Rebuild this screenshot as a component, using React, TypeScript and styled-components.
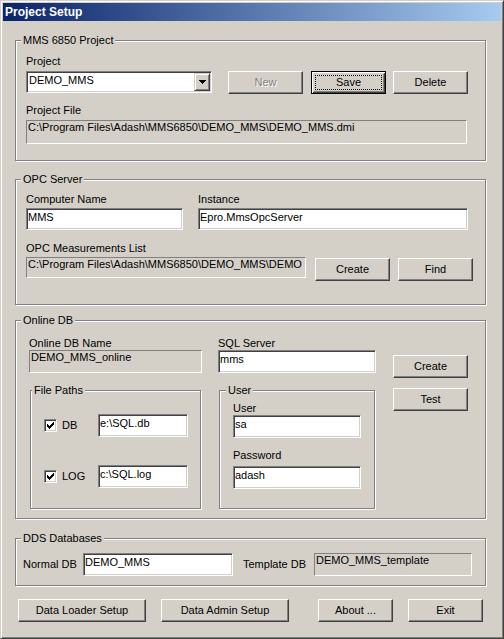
import React from "react";
import styled, { createGlobalStyle, css } from "styled-components";

const GlobalStyle = createGlobalStyle`
  html, body { margin: 0; padding: 0; background: #d4d0c8; }
  body { font-family: "Liberation Sans", Arial, sans-serif; font-size: 11px; }
  * { box-sizing: border-box; }
`;

const FONT = `"Liberation Sans", Arial, sans-serif`;

const Window = styled.div`
  width: 504px;
  height: 639px;
  background: #d4d0c8;
  border: 1px solid;
  border-color: #d4d0c8 #404040 #404040 #d4d0c8;
  box-shadow: inset 1px 1px 0 #fff, inset -1px -1px 0 #808080;
  padding: 2px;
  display: flex;
  flex-direction: column;
  font-family: ${FONT};
  font-size: 11px;
  color: #000;
`;

const TitleBar = styled.div`
  height: 18px;
  flex-shrink: 0;
  background: linear-gradient(to right, #0a246a, #a6caf0);
  display: flex;
  align-items: center;
  padding-left: 2px;
`;

const TitleText = styled.span`
  color: #fff;
  font-weight: bold;
  font-size: 12px;
  line-height: 18px;
  white-space: nowrap;
`;

const Client = styled.div`
  display: flex;
  flex-direction: column;
  padding-left: 12px;
`;

const Group = styled.div<{ $w: number; $h: number; $mt: number; $ml?: number; $pad: string }>`
  position: relative;
  flex-shrink: 0;
  width: ${(p) => p.$w}px;
  height: ${(p) => p.$h}px;
  margin-top: ${(p) => p.$mt}px;
  margin-left: ${(p) => p.$ml ?? 0}px;
  padding: ${(p) => p.$pad};
  border: 1px solid #808080;
  box-shadow: inset 1px 1px 0 #fff, 1px 1px 0 #fff;
`;

const Caption = styled.span<{ $left: number }>`
  position: absolute;
  top: -7px;
  left: ${(p) => p.$left}px;
  padding: 0 2px;
  line-height: 13px;
  background: #d4d0c8;
  white-space: nowrap;
`;

const Row = styled.div<{ $mt?: number; $center?: boolean; $pl?: number }>`
  display: flex;
  align-items: ${(p) => (p.$center ? "center" : "flex-start")};
  margin-top: ${(p) => p.$mt ?? 0}px;
  padding-left: ${(p) => p.$pl ?? 0}px;
`;

const Stack = styled.div<{ $ml?: number }>`
  display: flex;
  flex-direction: column;
  align-items: flex-start;
  margin-left: ${(p) => p.$ml ?? 0}px;
`;

const Label = styled.div<{ $w?: number; $mt?: number; $ml?: number }>`
  line-height: 13px;
  height: 13px;
  white-space: nowrap;
  flex-shrink: 0;
  ${(p) => (p.$w ? `width: ${p.$w}px;` : "")}
  margin-top: ${(p) => p.$mt ?? 0}px;
  margin-left: ${(p) => p.$ml ?? 0}px;
`;

const sunken = css`
  border: 1px solid;
  border-color: #808080 #fff #fff #808080;
  box-shadow: inset 1px 1px 0 #404040, inset -1px -1px 0 #d4d0c8;
`;

const Edit = styled.input<{ $w: number; $h: number; $mt?: number }>`
  ${sunken}
  width: ${(p) => p.$w}px;
  height: ${(p) => p.$h}px;
  margin: ${(p) => p.$mt ?? 0}px 0 0 0;
  padding: 1px 1px ${(p) => p.$h - 16}px 1px;
  background: #fff;
  color: #000;
  font-family: ${FONT};
  font-size: 11px;
  line-height: 13px;
  border-radius: 0;
  outline: none;
  flex-shrink: 0;
`;

const Static = styled.div<{ $w: number; $h: number; $mt?: number }>`
  width: ${(p) => p.$w}px;
  height: ${(p) => p.$h}px;
  margin-top: ${(p) => p.$mt ?? 0}px;
  border: 1px solid;
  border-color: #808080 #fff #fff #808080;
  padding: 0 1px;
  line-height: 13px;
  white-space: nowrap;
  overflow: hidden;
  flex-shrink: 0;
`;

const Combo = styled.div<{ $w: number; $mt?: number }>`
  ${sunken}
  width: ${(p) => p.$w}px;
  height: 22px;
  margin-top: ${(p) => p.$mt ?? 0}px;
  padding: 1px;
  background: #fff;
  display: flex;
  align-items: flex-start;
`;

const ComboText = styled.span`
  flex: 1;
  padding: 1px 0 0 1px;
  line-height: 13px;
  white-space: nowrap;
`;

const DropButton = styled.span`
  width: 16px;
  height: 18px;
  background: #d4d0c8;
  border: 1px solid;
  border-color: #d4d0c8 #404040 #404040 #d4d0c8;
  box-shadow: inset 1px 1px 0 #fff, inset -1px -1px 0 #808080;
  display: flex;
  align-items: center;
  justify-content: center;
`;

const Button = styled.button<{ $w: number; $ml?: number; $mt?: number; $default?: boolean }>`
  position: relative;
  flex-shrink: 0;
  width: ${(p) => p.$w}px;
  height: 23px;
  margin: ${(p) => p.$mt ?? 0}px 0 0 ${(p) => p.$ml ?? 0}px;
  padding: 0;
  background: #d4d0c8;
  color: #000;
  font-family: ${FONT};
  font-size: 11px;
  line-height: 13px;
  border-radius: 0;
  border: 1px solid;
  border-color: #fff #404040 #404040 #fff;
  box-shadow: inset -1px -1px 0 #808080, inset 1px 1px 0 #d4d0c8;
  outline: none;
  ${(p) =>
    p.$default &&
    css`
      border-color: #000;
      box-shadow: inset 1px 1px 0 #fff, inset -1px -1px 0 #404040, inset 2px 2px 0 #d4d0c8,
        inset -2px -2px 0 #808080;
      &::after {
        content: "";
        position: absolute;
        inset: 3px;
        border: 1px dotted #000;
      }
    `}
  &:disabled {
    color: #808080;
    text-shadow: 1px 1px 0 #fff;
  }
`;

const CheckBox = styled.span<{ $ml?: number }>`
  ${sunken}
  display: inline-block;
  width: 13px;
  height: 13px;
  background: #fff;
  margin-left: ${(p) => p.$ml ?? 0}px;
  flex-shrink: 0;
  position: relative;
  & > svg {
    display: block;
    position: absolute;
    left: -1px;
    top: -1px;
  }
`;

const CheckMark = () => (
  <svg width="13" height="13" viewBox="0 0 13 13" shapeRendering="crispEdges">
    <path
      fill="#000"
      d="M3 5h1v3h-1z M4 6h1v3h-1z M5 7h1v3h-1z M6 6h1v3h-1z M7 5h1v3h-1z M8 4h1v3h-1z M9 3h1v3h-1z"
    />
  </svg>
);

const Arrow = () => (
  <svg width="7" height="4" viewBox="0 0 7 4" shapeRendering="crispEdges">
    <path fill="#000" d="M0 0h7v1h-7z M1 1h5v1h-5z M2 2h3v1h-3z M3 3h1v1h-1z" />
  </svg>
);

export default function App() {
  return (
    <>
      <GlobalStyle />
      <Window>
        <TitleBar>
          <TitleText>Project Setup</TitleText>
        </TitleBar>
        <Client>
          <Group $w={471} $h={121} $mt={19} $pad="14px 0 0 10px">
            <Caption $left={5}>MMS 6850 Project</Caption>
            <Row>
              <Stack>
                <Label>Project</Label>
                <Combo $w={186} $mt={3}>
                  <ComboText>DEMO_MMS</ComboText>
                  <DropButton>
                    <Arrow />
                  </DropButton>
                </Combo>
              </Stack>
              <Button $w={75} $ml={16} $mt={16} disabled>
                New
              </Button>
              <Button $w={75} $ml={8} $mt={16} $default>
                Save
              </Button>
              <Button $w={75} $ml={7} $mt={16}>
                Delete
              </Button>
            </Row>
            <Row $mt={10}>
              <Stack>
                <Label>Project File</Label>
                <Static $w={441} $h={24} $mt={3}>
                  C:\Program Files\Adash\MMS6850\DEMO_MMS\DEMO_MMS.dmi
                </Static>
              </Stack>
            </Row>
          </Group>

          <Group $w={471} $h={126} $mt={18} $pad="13px 0 0 10px">
            <Caption $left={5}>OPC Server</Caption>
            <Row>
              <Stack>
                <Label>Computer Name</Label>
                <Edit $w={157} $h={22} $mt={2} defaultValue="MMS" />
              </Stack>
              <Stack $ml={15}>
                <Label>Instance</Label>
                <Edit $w={270} $h={22} $mt={2} defaultValue="Epro.MmsOpcServer" />
              </Stack>
            </Row>
            <Row $mt={12}>
              <Stack>
                <Label>OPC Measurements List</Label>
                <Static $w={280} $h={21} $mt={2}>
                  C:\Program Files\Adash\MMS6850\DEMO_MMS\DEMO
                </Static>
              </Stack>
              <Button $w={75} $ml={9} $mt={16}>
                Create
              </Button>
              <Button $w={75} $ml={8} $mt={16}>
                Find
              </Button>
            </Row>
          </Group>

          <Group $w={471} $h={199} $mt={15} $pad="16px 0 0 13px">
            <Caption $left={5}>Online DB</Caption>
            <Row>
              <Stack>
                <Label>Online DB Name</Label>
                <Static $w={173} $h={23}>
                  DEMO_MMS_online
                </Static>
                <Group $w={171} $h={119} $mt={17} $ml={1} $pad="23px 0 0 13px">
                  <Caption $left={1}>File Paths</Caption>
                  <Row $center>
                    <CheckBox>
                      <CheckMark />
                    </CheckBox>
                    <Label $ml={5} $w={36}>
                      DB
                    </Label>
                    <Edit $w={90} $h={23} defaultValue="e:\SQL.db" />
                  </Row>
                  <Row $center $mt={28}>
                    <CheckBox>
                      <CheckMark />
                    </CheckBox>
                    <Label $ml={5} $w={36}>
                      LOG
                    </Label>
                    <Edit $w={90} $h={23} defaultValue="c:\SQL.log" />
                  </Row>
                </Group>
              </Stack>
              <Stack $ml={16}>
                <Label>SQL Server</Label>
                <Edit $w={158} $h={23} defaultValue="mms" />
                <Group $w={156} $h={119} $mt={17} $ml={1} $pad="11px 0 0 13px">
                  <Caption $left={6}>User</Caption>
                  <Label>User</Label>
                  <Edit $w={128} $h={23} defaultValue="sa" />
                  <Label $mt={11}>Password</Label>
                  <Edit $w={128} $h={23} $mt={4} defaultValue="adash" />
                </Group>
              </Stack>
              <Stack $ml={17}>
                <Button $w={75} $mt={18}>
                  Create
                </Button>
                <Button $w={75} $mt={10}>
                  Test
                </Button>
              </Stack>
            </Row>
          </Group>

          <Group $w={471} $h={48} $mt={19} $pad="14px 0 0 7px">
            <Caption $left={5}>DDS Databases</Caption>
            <Row $center>
              <Label $w={60}>Normal DB</Label>
              <Edit $w={150} $h={23} defaultValue="DEMO_MMS" />
              <Label $ml={10} $w={71}>
                Template DB
              </Label>
              <Static $w={158} $h={23}>
                DEMO_MMS_template
              </Static>
            </Row>
          </Group>

          <Row $mt={13} $pl={3}>
            <Button $w={128}>Data Loader Setup</Button>
            <Button $w={128} $ml={15}>
              Data Admin Setup
            </Button>
            <Button $w={75} $ml={29}>
              About ...
            </Button>
            <Button $w={75} $ml={15}>
              Exit
            </Button>
          </Row>
        </Client>
      </Window>
    </>
  );
}
